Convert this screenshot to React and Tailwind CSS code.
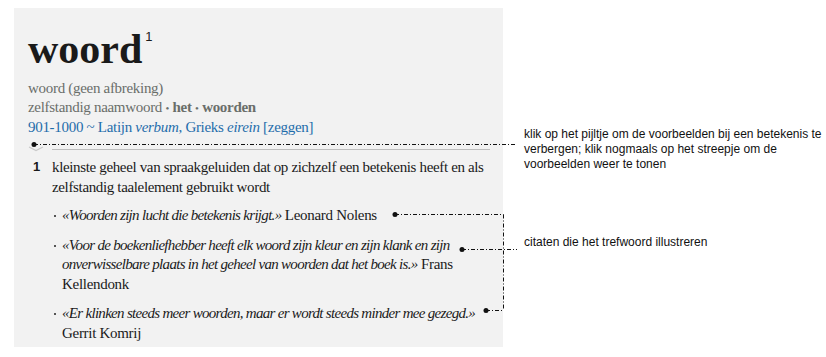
import React from 'react';

const serif = { fontFamily: '"Liberation Serif", "Times New Roman", serif' };

const quotes = [
  { text: '«Woorden zijn lucht die betekenis krijgt.»', author: 'Leonard Nolens' },
  {
    text: '«Voor de boekenliefhebber heeft elk woord zijn kleur en zijn klank en zijn onverwisselbare plaats in het geheel van woorden dat het boek is.»',
    author: 'Frans Kellendonk',
  },
  { text: '«Er klinken steeds meer woorden, maar er wordt steeds minder mee gezegd.»', author: 'Gerrit Komrij' },
];

// annotation connectors drawn over the page
function Connectors() {
  const dash = '4 2 1 2';
  return (
    <svg className="absolute left-0 top-0 pointer-events-none" width="826" height="357">
      <g stroke="#111" strokeWidth="1" fill="none" strokeDasharray={dash}>
        <line x1="34" y1="144.5" x2="516" y2="144.5" />
        <line x1="395" y1="214.5" x2="503.5" y2="214.5" />
        <line x1="503.5" y1="214.5" x2="503.5" y2="310.5" />
        <line x1="462" y1="249.5" x2="517" y2="249.5" />
        <line x1="486" y1="310.5" x2="503.5" y2="310.5" />
      </g>
      <g fill="#111">
        <circle cx="34" cy="144.5" r="2.5" />
        <circle cx="395" cy="214.5" r="2.5" />
        <circle cx="462" cy="249.5" r="2.5" />
        <circle cx="486" cy="310.5" r="2.5" />
      </g>
    </svg>
  );
}

export default function App() {
  return (
    <div className="relative w-[826px] h-[357px] bg-white overflow-hidden">
      <div className="flex">
        <div className="ml-[14px] mt-[8px] w-[489px] h-[339px] bg-[#f2f2f2] pl-[14px] pr-[13px] pt-[18px]" style={serif}>
          <h1 className="text-[42px] leading-[46px] font-bold text-[#1a1a1a] flex items-start">
            woord
            <sup className="text-[13px] font-normal mt-[11px] ml-[3px] top-0" style={{ fontFamily: '"Liberation Sans", Arial, sans-serif' }}>1</sup>
          </h1>
          <div className="mt-[7px] text-[15px] leading-[19px] text-[#6a6e6a] tracking-[-0.3px]">
            <div>woord (geen afbreking)</div>
            <div>
              zelfstandig naamwoord <span className="text-[11px] align-middle">•</span> <span className="font-bold">het</span>{' '}
              <span className="text-[11px] align-middle">•</span> <span className="font-bold">woorden</span>
            </div>
            <div className="text-[#1f6dab]">
              901-1000 ~ Latijn <i>verbum</i>, Grieks <i>eirein</i> [zeggen]
            </div>
          </div>
          <div className="mt-[10px] flex items-center h-[4px]">
            <svg width="16" height="6" viewBox="0 0 16 6">
              <path d="M1 1 L8 4.5 L15 1" stroke="#c9c9c9" strokeWidth="1.2" fill="none" />
            </svg>
            <div className="ml-[8px] flex-1 h-px bg-[#bdbdbd]"></div>
          </div>
          <div className="mt-[6px] flex text-[15px] leading-[20px] text-[#1a1a1a] tracking-[-0.35px]">
            <span className="w-[24px] shrink-0 pl-[5px] font-bold text-[13px]" style={{ fontFamily: '"Liberation Sans", Arial, sans-serif' }}>1</span>
            <div>
              <p>kleinste geheel van spraakgeluiden dat op zichzelf een betekenis heeft en als zelfstandig taalelement gebruikt wordt</p>
              <ul className="mt-[9px] flex flex-col gap-[10px]">
                {quotes.map((q) => (
                  <li key={q.author} className="flex leading-[19.5px]">
                    <span className="w-[10px] shrink-0 pt-[9px] pl-[2px]">
                      <span className="block w-[2px] h-[2px] bg-[#555]"></span>
                    </span>
                    <p>
                      <i className="tracking-[-0.7px]">{q.text}</i> <span className="tracking-[-0.3px]">{q.author}</span>
                    </p>
                  </li>
                ))}
              </ul>
            </div>
          </div>
        </div>
        <div className="ml-[21px] flex flex-col text-[12px] leading-[15px] text-[#111]" style={{ fontFamily: '"Liberation Sans", Arial, sans-serif' }}>
          <p className="mt-[127px] w-[300px]">
            klik op het pijltje om de voorbeelden bij een betekenis te verbergen; klik nogmaals op het streepje om de voorbeelden weer te tonen
          </p>
          <p className="mt-[63px]">citaten die het trefwoord illustreren</p>
        </div>
      </div>
      <Connectors />
    </div>
  );
}
